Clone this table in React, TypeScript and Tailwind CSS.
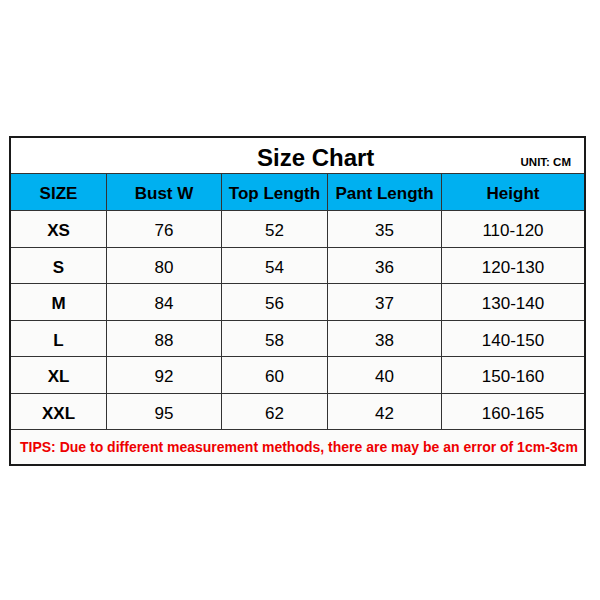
import React from "react";

const cols = ["w-[96px]", "w-[115px]", "w-[106px]", "w-[114px]", "w-[142px]"];
const heights = ["h-[37px]", "h-[36px]", "h-[37px]", "h-[36px]", "h-[37px]", "h-[36px]"];
const rows = [
  ["XS", "76", "52", "35", "110-120"],
  ["S", "80", "54", "36", "120-130"],
  ["M", "84", "56", "37", "130-140"],
  ["L", "88", "58", "38", "140-150"],
  ["XL", "92", "60", "40", "150-160"],
  ["XXL", "95", "62", "42", "160-165"],
];
const headers = ["SIZE", "Bust W", "Top Length", "Pant Length", "Height"];

export default function App() {
  return (
    <div
      className="w-[600px] h-[600px] bg-white pt-[136px] pl-[9px]"
      style={{ fontFamily: '"Liberation Sans", Arial, sans-serif' }}
    >
      <div className="w-[577px] border-2 border-[#1a1a1a] bg-[#fbfbfa] text-black">
        <div className="h-[36px] flex items-baseline bg-white border-b border-[#333] pt-[8px]">
          <div className="pl-[246px] text-[24px] leading-[24px] font-bold">Size Chart</div>
          <div className="flex-1" />
          <div className="pr-[13px] text-[11.5px] leading-[11px] font-bold">UNIT: CM</div>
        </div>
        <div className="flex h-[37px] bg-[#00b0f0] border-b border-[#333]">
          {headers.map((h, i) => (
            <div
              key={h}
              className={`${cols[i]} flex items-center justify-center pt-[4px] text-[17px] font-bold ${i < 4 ? "border-r border-[#333]" : ""}`}
            >
              {h}
            </div>
          ))}
        </div>
        {rows.map((r, ri) => (
          <div key={r[0]} className={`flex ${heights[ri]} border-b border-[#333]`}>
            {r.map((c, i) => (
              <div
                key={i}
                className={`${cols[i]} flex items-center justify-center pt-[4px] text-[17px] ${i === 0 ? "font-bold" : ""} ${i < 4 ? "border-r border-[#333]" : ""}`}
              >
                {c}
              </div>
            ))}
          </div>
        ))}
        <div className="h-[34px] flex items-center pl-[9px] text-[14px] font-bold text-[#ee0000] whitespace-nowrap">
          TIPS: Due to different measurement methods, there are may be an error of 1cm-3cm
        </div>
      </div>
    </div>
  );
}
